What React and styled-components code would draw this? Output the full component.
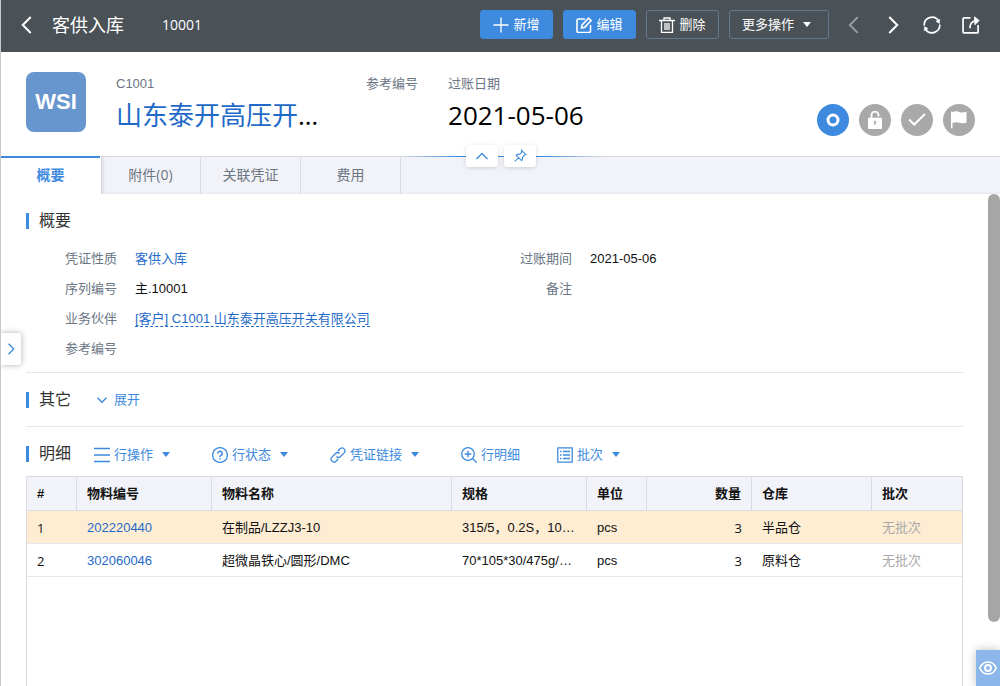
import React, { useState } from 'react';
import styled, { createGlobalStyle, css, ThemeProvider } from 'styled-components';

const theme = {
    headerBg: '#4a5157',
    blue: '#3d8ade',
    link: '#1f6ac8',
    label: '#6b7684',
    border: '#d8dbe4',
    stripBg: '#f2f3f8',
    muted: '#a9a9a9',
    rowActive: '#feedd3',
    uiFont: `'Liberation Sans', 'Noto Sans CJK SC', sans-serif`,
    displayFont: `'Open Sans', 'Noto Sans CJK SC', sans-serif`,
}

const GlobalStyle = createGlobalStyle`
    * {
        box-sizing: border-box;
    }

    body {
        margin: 0;
        background: #fff;
        color: #111;
        font-family: ${({ theme }) => theme.uiFont};
        font-size: 13px;
        line-height: 20px;
    }

    button {
        font: inherit;
        color: inherit;
        background: none;
        border: 0;
        padding: 0;
        cursor: pointer;
    }

    h1, h2, p, dl, dd {
        margin: 0;
        font-weight: normal;
    }

    svg {
        display: block;
        flex: none;
    }
`

const Page = styled.div`
    display: flex;
    flex-direction: column;
    position: relative;
    height: 100vh;
    border-left: 1px solid #c8c8c8;
    overflow: hidden;
`

const Header = styled.header`
    display: flex;
    flex: none;
    align-items: center;
    height: 52px;
    padding: 0 20px 3px 17px;
    background: ${({ theme }) => theme.headerBg};
    color: #fff;
`

const HeaderTitle = styled.h1`
    margin-left: 16px;
    font-family: ${({ theme }) => theme.displayFont};
    font-size: 18px;
    line-height: 24px;
`

const HeaderCode = styled.span`
    flex: 1;
    margin-left: 38px;
    font-family: ${({ theme }) => theme.displayFont};
    font-size: 14px;
`

const HeaderActions = styled.div`
    display: flex;
    gap: 10px;
    margin-right: 16px;
`

const HeaderButton = styled.button`
    display: flex;
    align-items: center;
    justify-content: center;
    gap: 4px;
    min-width: 73px;
    height: 29px;
    padding: 0 12px;
    border: 1px solid ${({ theme, $primary }) => $primary ? theme.blue : '#66788b'};
    border-radius: 3px;
    background: ${({ theme, $primary }) => $primary ? theme.blue : 'transparent'};
`

const HeaderIcons = styled.div`
    display: flex;
    gap: 21px;
`

const IconButton = styled.button`
    display: block;

    &:disabled {
        opacity: .45;
    }
`

const Caret = styled.span`
    width: 0;
    margin: 0 5px;
    border: 4px solid transparent;
    border-top: 5px solid currentColor;
    border-bottom: 0;
`

const Summary = styled.section`
    display: flex;
    flex: none;
    gap: 30px;
    height: 104px;
    padding: 20px 25px 0;
`

const Logo = styled.div`
    width: 60px;
    height: 60px;
    border-radius: 8px;
    background: #6795ce;
    color: #fff;
    font-size: 22px;
    font-weight: bold;
    line-height: 60px;
    text-align: center;
`

const SummaryItem = styled.div`
    width: ${({ $wide }) => $wide ? '220px' : 'auto'};
    padding-top: 2px;
    color: ${({ theme }) => theme.label};
`

const SummaryValue = styled.p`
    overflow: hidden;
    color: #000;
    font-family: ${({ theme }) => theme.displayFont};
    font-size: 26px;
    line-height: 36px;
    margin-top: 3px;
    text-overflow: ellipsis;
    white-space: nowrap;
`

const Link = styled.a`
    color: ${({ theme }) => theme.link};
    text-decoration: none;
    ${({ $dashed }) => $dashed && css`
        border-bottom: 1px dashed;
    `}
`

const StatusList = styled.div`
    display: flex;
    gap: 10px;
    margin: 32px 0 0 auto;
`

const Status = styled.button`
    display: grid;
    place-items: center;
    width: 32px;
    height: 32px;
    border-radius: 50%;
    background: ${({ theme, $active }) => $active ? theme.blue : theme.muted};
    color: #fff;
`

const TabStrip = styled.nav`
    display: flex;
    flex: none;
    position: relative;
    height: 38px;
    background: ${({ theme }) => theme.stripBg};
    box-shadow: inset 0 1px ${({ theme }) => theme.border}, inset 0 -3px 3px -2px #0000000d;
`

const Tab = styled.button`
    width: 100px;
    border-right: 1px solid ${({ theme }) => theme.border};
    color: ${({ theme }) => theme.label};
    font-family: ${({ theme }) => theme.displayFont};
    font-size: 14px;
    ${({ $active, theme }) => $active && css`
        border-right-color: #fff;
        background: #fff;
        box-shadow: inset 0 2px ${theme.blue}, 1px 0 4px #0000002e;
        color: ${theme.blue};
        font-weight: bold;
        clip-path: inset(0 -5px 0 0);
    `}
`

const Pinboard = styled.div`
    display: flex;
    position: absolute;
    top: -11px;
    left: 50%;
    justify-content: center;
    gap: 6px;
    width: 204px;
    margin-left: -102px;
    background: linear-gradient(90deg, transparent, ${({ theme }) => theme.blue} 30%, ${({ theme }) => theme.blue} 70%, transparent) 0 11px / 100% 1px no-repeat;
`

const PinButton = styled.button`
    display: grid;
    place-items: center;
    width: 32px;
    height: 22px;
    border-radius: 3px;
    background: #fff;
    box-shadow: 0 1px 4px #00000026;
    color: ${({ theme }) => theme.blue};
`

const Body = styled.main`
    display: flex;
    flex: 1;
    flex-direction: column;
    min-height: 0;
    position: relative;
    padding: 0 37px 0 25px;
`

const Section = styled.section`
    flex: none;
    border-bottom: 1px solid #e6e7ea;
    padding: ${({ $tall }) => $tall ? '15px 0 8px' : '15px 0 14px'};
`

const SectionHead = styled.div`
    display: flex;
    align-items: center;
    height: 24px;
`

const SectionTitle = styled.h2`
    border-left: 3px solid ${({ theme }) => theme.blue};
    padding-left: 10px;
    color: #333;
    font-size: 16px;
    line-height: 16px;
`

const ToggleButton = styled.button`
    display: flex;
    align-items: center;
    gap: 6px;
    margin-left: 25px;
    color: ${({ theme }) => theme.blue};
`

const FieldGrid = styled.div`
    display: grid;
    grid-template-columns: 1fr 1fr;
    padding: 11px 27px 0 0;
`

const Field = styled.dl`
    display: flex;
    gap: 18px;
    line-height: 30px;
`

const FieldLabel = styled.dt`
    width: 91px;
    color: ${({ theme }) => theme.label};
    text-align: right;
`

const DetailHead = styled(SectionHead)`
    flex: none;
    margin: 15px 0 10px;
`

const Toolbar = styled.div`
    display: flex;
    gap: 37px;
    margin-left: 23px;
    padding-top: 1px;
    color: ${({ theme }) => theme.blue};
`

const ToolButton = styled.button`
    display: flex;
    align-items: center;
    gap: 4px;
`

const TableBox = styled.div`
    flex: 1;
    border: 1px solid ${({ theme }) => theme.border};
    border-bottom: 0;
`

const Table = styled.table`
    width: 100%;
    border-collapse: separate;
    border-spacing: 0;
    table-layout: fixed;
`

const HeadCell = styled.th`
    width: ${({ $width }) => $width ? `${$width}px` : 'auto'};
    height: 34px;
    padding: 0 10px;
    border-bottom: 1px solid ${({ theme }) => theme.border};
    border-right: 1px solid ${({ theme }) => theme.border};
    background: ${({ theme }) => theme.stripBg};
    text-align: ${({ $right }) => $right ? 'right' : 'left'};

    &:last-child {
        border-right: 0;
    }
`

const Row = styled.tr`
    background: ${({ theme, $active }) => $active ? theme.rowActive : '#fff'};
`

const Cell = styled.td`
    height: 33px;
    padding: 1px 10px 0;
    overflow: hidden;
    border-bottom: 1px solid #e6e7ea;
    color: ${({ theme, $muted }) => $muted ? theme.muted : 'inherit'};
    font-family: ${({ theme, $display }) => $display ? theme.displayFont : 'inherit'};
    text-align: ${({ $right }) => $right ? 'right' : 'left'};
    text-overflow: ellipsis;
    white-space: nowrap;
`

const SideHandle = styled.button`
    display: grid;
    place-items: center;
    position: absolute;
    top: 139px;
    left: 0;
    width: 20px;
    height: 32px;
    border-radius: 0 3px 3px 0;
    background: #fff;
    box-shadow: 0 0 6px #00000050;
    color: ${({ theme }) => theme.blue};
`

const ScrollThumb = styled.div`
    position: absolute;
    top: 0;
    right: 0;
    width: 12px;
    height: 87%;
    border-radius: 6px;
    background: #a6a6a6;
`

const PreviewButton = styled.button`
    display: grid;
    place-items: center;
    position: absolute;
    right: 0;
    bottom: 0;
    width: 24px;
    height: 36px;
    background: #8bb7ea;
    box-shadow: 0 0 10px #00000040;
    color: #fff;
`

const paths = {
    plus: <path d="M8 .5v15M.5 8h15" />,
    edit: <><path d="M9 2H2.500a1.500 1.500 0 0 0-1.500 1.500v10.500a1.500 1.500 0 0 0 1.500 1.500h10.500a1.500 1.500 0 0 0 1.500-1.500V8" /><path d="M5.500 11l.6-3L12.500 1.200l2.600 2.400L8.600 10.400z" /></>,
    trash: <path d="M0 3.500h16M5 3.500V1h6v2.500M2.500 3.500v12h11v-12M6 6v7M8 6v7M10 6v7" />,
    left: <path d="M12 1L4.500 8.500 12 16" />,
    right: <path d="M5 1l7.500 7.500L5 16" />,
    refresh: <><path d="M1.200 9A7.300 7.300 0 0 1 14.600 4.500" /><path d="M15.800 8A7.300 7.300 0 0 1 2.400 12.500" /><path d="M15.800 3l-.2 4-3.300-1.900zM1.200 14l.2-4 3.300 1.900z" fill="currentColor" strokeWidth="0.5" /></>,
    share: <><path d="M8 1.800H2a1 1 0 0 0-1 1V15a1 1 0 0 0 1 1h12.200a1 1 0 0 0 1-1V8.500" /><path d="M7.500 11.500C7.500 7.500 9 5 13 4.500" /><path d="M11.800.8l4.400 3.500-4 4z" fill="currentColor" strokeWidth="0.8" /></>,
    up: <path d="M2.500 11L8 5.500l5.500 5.500" />,
    down: <path d="M2 5l6 6 6-6" />,
    pin: <path d="M9.800 1.500l4.700 4.700-1.300.5-2.200 2.600-.3 3-1 .9-6-6 1-1 2.900-.2 2.400-2.200zM6.500 10.200L1.800 14.200" />,
    lines: <path d="M0 1.500h16M0 8h16M0 14.500h16" />,
    help: <><circle cx="8" cy="8" r="7.400" /><path d="M5.800 6.400a2.200 2.200 0 1 1 3.200 2C8.200 8.800 8 9.200 8 10M8 11.200v1.300" strokeWidth="1.600" /></>,
    chain: <><path d="M6.500 9.500a2.500 2.500 0 0 0 3.800.2l3.800-3.800A2.900 2.900 0 0 0 10 1.800L7.800 4" /><path d="M9.500 6.500a2.500 2.500 0 0 0-3.800-.2L1.900 10.100A2.900 2.900 0 0 0 6 14.200L8.200 12" /></>,
    zoomIn: <><circle cx="7" cy="7" r="6.300" /><path d="M7 3.700v6.600M3.700 7h6.600M11.500 11.500l4.200 4.200" /></>,
    batch: <><path d="M.8.8h14.400v14.400H.8z" /><path d="M3 4.500h1.500M6 4.500h7M3 8h1.500M6 8h7M3 11.500h1.500M6 11.500h7" /></>,
    eye: <><path d="M.7 8C3.500.8 12.500.8 15.300 8 12.500 15.200 3.500 15.200.7 8z" /><circle cx="8" cy="8" r="2.600" strokeWidth="1.800" /></>,
    ring: <circle cx="8" cy="8" r="5" strokeWidth="3" />,
    unlock: <><path d="M5.500 8V4.500a3.500 3.500 0 0 1 7-.6v1.600" strokeWidth="1.800" /><path fill="currentColor" stroke="none" fillRule="evenodd" d="M2.800 6.800h12.400a.8.8 0 0 1 .8.800v9.600a.8.8 0 0 1-.8.800H2.800a.8.8 0 0 1-.8-.8V7.600a.8.8 0 0 1 .8-.8zM9 9.800a1.300 1.300 0 0 0-.6 2.400V14h1.200v-1.800A1.300 1.300 0 0 0 9 9.800z" /></>,
    check: <path d="M1 8.500l5.200 5L17 3" strokeWidth="2" />,
    flag: <path fill="currentColor" stroke="none" d="M1 .5h1.500v1C5-.3 7.500.3 9.500 1c2.200.9 4.500.6 7-.3v10.800c-2.500 1.200-5 1-7 .3-2.200-.9-4.500-.8-7 .3v5.200H1z" />,
}

const Icon = ({ name, size = 16, weight = 1.3, box = 16 }) => (
    <svg
        width={size}
        height={size}
        viewBox={`0 0 ${box} ${box}`}
        fill="none"
        stroke="currentColor"
        strokeWidth={weight}
        aria-hidden="true"
    >
        {paths[name]}
    </svg>
)

const tabs = ['概要', '附件(0)', '关联凭证', '费用'];

const statuses = [
    { icon: 'ring', label: '打开' },
    { icon: 'unlock', label: '解锁', size: 18 },
    { icon: 'check', label: '审核', size: 18 },
    { icon: 'flag', label: '标记', size: 18 },
];

const tools = [
    { icon: 'lines', text: '行操作', caret: true },
    { icon: 'help', text: '行状态', caret: true },
    { icon: 'chain', text: '凭证链接', caret: true },
    { icon: 'zoomIn', text: '行明细' },
    { icon: 'batch', text: '批次', caret: true },
];

const columns = [
    { title: '#', width: 50 },
    { title: '物料编号', width: 135 },
    { title: '物料名称', width: 240 },
    { title: '规格', width: 135 },
    { title: '单位', width: 60 },
    { title: '数量', width: 105, right: true },
    { title: '仓库', width: 120 },
    { title: '批次' },
];

const rows = [
    { id: 1, code: '202220440', name: '在制品/LZZJ3-10', spec: '315/5，0.2S，10P10', unit: 'pcs', qty: 3, store: '半品仓', batch: '无批次' },
    { id: 2, code: '302060046', name: '超微晶铁心/圆形/DMC', spec: '70*105*30/475g/0.25mm', unit: 'pcs', qty: 3, store: '原料仓', batch: '无批次' },
];

const App = () => {
    const [ activeTab, setActiveTab ] = useState(0);
    const [ activeRow, setActiveRow ] = useState(1);

    return (
        <ThemeProvider theme={theme}>
            <GlobalStyle />
            <Page>
                <Header>
                    <IconButton aria-label="返回"><Icon name="left" size={18} box={17} weight={1.9} /></IconButton>
                    <HeaderTitle>客供入库</HeaderTitle>
                    <HeaderCode>10001</HeaderCode>
                    <HeaderActions>
                        <HeaderButton $primary><Icon name="plus" />新增</HeaderButton>
                        <HeaderButton $primary><Icon name="edit" weight={1.6} />编辑</HeaderButton>
                        <HeaderButton><Icon name="trash" />删除</HeaderButton>
                        <HeaderButton>更多操作<Caret /></HeaderButton>
                    </HeaderActions>
                    <HeaderIcons>
                        <IconButton disabled aria-label="上一条"><Icon name="left" size={18} box={17} weight={1.7} /></IconButton>
                        <IconButton aria-label="下一条"><Icon name="right" size={18} box={17} weight={1.9} /></IconButton>
                        <IconButton aria-label="刷新"><Icon name="refresh" size={18} box={17} weight={1.6} /></IconButton>
                        <IconButton aria-label="分享"><Icon name="share" size={18} box={17} weight={1.6} /></IconButton>
                    </HeaderIcons>
                </Header>

                <Summary>
                    <Logo>WSI</Logo>
                    <SummaryItem $wide>
                        <p>C1001</p>
                        <SummaryValue><Link href="#partner">山东泰开高压开关有限公司</Link></SummaryValue>
                    </SummaryItem>
                    <SummaryItem>
                        <p>参考编号</p>
                    </SummaryItem>
                    <SummaryItem>
                        <p>过账日期</p>
                        <SummaryValue>2021-05-06</SummaryValue>
                    </SummaryItem>
                    <StatusList>
                        {statuses.map((s, i) => (
                            <Status key={s.icon} $active={i === 0} aria-label={s.label}>
                                <Icon name={s.icon} size={s.size} box={s.size} />
                            </Status>
                        ))}
                    </StatusList>
                </Summary>

                <TabStrip>
                    {tabs.map((tab, i) => (
                        <Tab key={tab} $active={i === activeTab} onClick={() => setActiveTab(i)}>{tab}</Tab>
                    ))}
                    <Pinboard>
                        <PinButton aria-label="收起"><Icon name="up" /></PinButton>
                        <PinButton aria-label="固定"><Icon name="pin" size={14} /></PinButton>
                    </Pinboard>
                </TabStrip>

                <Body>
                    <Section $tall>
                        <SectionHead>
                            <SectionTitle>概要</SectionTitle>
                        </SectionHead>
                        <FieldGrid>
                            <Field>
                                <FieldLabel>凭证性质</FieldLabel>
                                <dd><Link href="#type">客供入库</Link></dd>
                            </Field>
                            <Field>
                                <FieldLabel>过账期间</FieldLabel>
                                <dd>2021-05-06</dd>
                            </Field>
                            <Field>
                                <FieldLabel>序列编号</FieldLabel>
                                <dd>主.10001</dd>
                            </Field>
                            <Field>
                                <FieldLabel>备注</FieldLabel>
                                <dd />
                            </Field>
                            <Field>
                                <FieldLabel>业务伙伴</FieldLabel>
                                <dd><Link $dashed href="#partner">[客户] C1001 山东泰开高压开关有限公司</Link></dd>
                            </Field>
                            <span />
                            <Field>
                                <FieldLabel>参考编号</FieldLabel>
                                <dd />
                            </Field>
                        </FieldGrid>
                    </Section>

                    <Section>
                        <SectionHead>
                            <SectionTitle>其它</SectionTitle>
                            <ToggleButton><Icon name="down" size={12} weight={1.8} />展开</ToggleButton>
                        </SectionHead>
                    </Section>

                    <DetailHead>
                        <SectionTitle>明细</SectionTitle>
                        <Toolbar>
                            {tools.map(t => (
                                <ToolButton key={t.text}>
                                    <Icon name={t.icon} />
                                    {t.text}
                                    {t.caret && <Caret />}
                                </ToolButton>
                            ))}
                        </Toolbar>
                    </DetailHead>
                    <TableBox>
                        <Table>
                            <thead>
                                <tr>
                                    {columns.map(c => (
                                        <HeadCell key={c.title} $width={c.width} $right={c.right}>{c.title}</HeadCell>
                                    ))}
                                </tr>
                            </thead>
                            <tbody>
                                {rows.map(r => (
                                    <Row key={r.id} $active={r.id === activeRow} onClick={() => setActiveRow(r.id)}>
                                        <Cell $display>{r.id}</Cell>
                                        <Cell><Link href={`#${r.code}`}>{r.code}</Link></Cell>
                                        <Cell>{r.name}</Cell>
                                        <Cell>{r.spec}</Cell>
                                        <Cell>{r.unit}</Cell>
                                        <Cell $display $right>{r.qty}</Cell>
                                        <Cell>{r.store}</Cell>
                                        <Cell $muted>{r.batch}</Cell>
                                    </Row>
                                ))}
                            </tbody>
                        </Table>
                    </TableBox>

                    <SideHandle aria-label="展开侧栏"><Icon name="right" size={12} box={17} weight={1.8} /></SideHandle>
                    <ScrollThumb />
                    <PreviewButton aria-label="预览"><Icon name="eye" size={18} weight={1.4} /></PreviewButton>
                </Body>
            </Page>
        </ThemeProvider>
    )
}

export default App;
